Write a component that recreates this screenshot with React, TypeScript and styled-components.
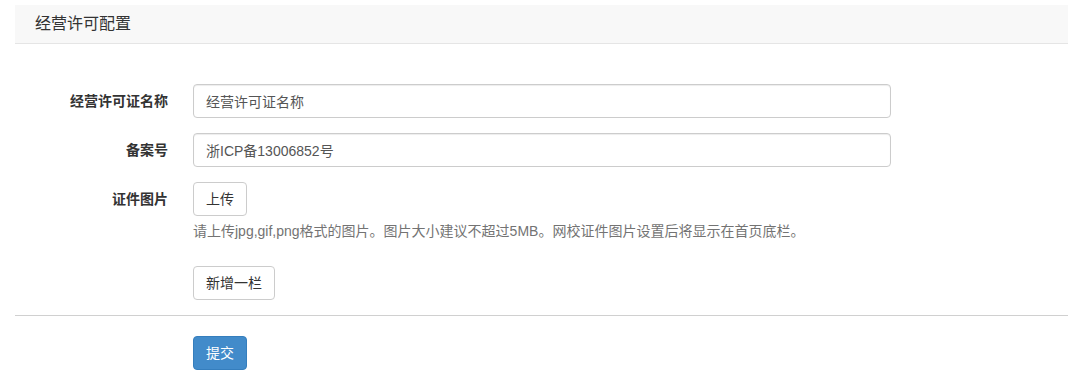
import React from "react";
import styled, { createGlobalStyle } from "styled-components";

const Global = createGlobalStyle`
  html, body { margin: 0; padding: 0; background: #fff; }
  body {
    font-family: "Liberation Sans", "Noto Sans CJK SC", sans-serif;
    font-size: 14px;
    line-height: 20px;
    color: #333;
  }
  * { box-sizing: border-box; }
`;

const Page = styled.div`
  padding: 5px 12px 0 15px;
`;

const Header = styled.div`
  height: 39px;
  background: #f8f8f8;
  border-bottom: 1px solid #e5e5e5;
  display: flex;
  align-items: center;
  padding-left: 20px;
  font-size: 16px;
  color: #333;
`;

const Form = styled.form`
  padding-top: 40px;
  display: flex;
  flex-direction: column;
`;

const Row = styled.div<{ $mb?: number }>`
  display: grid;
  grid-template-columns: 153px 698px;
  column-gap: 25px;
  margin-bottom: ${(p) => (p.$mb ?? 15)}px;
`;

const Label = styled.label`
  text-align: right;
  font-weight: bold;
  padding-top: 7px;
  line-height: 20px;
`;

const Field = styled.div`
  display: flex;
  flex-direction: column;
  align-items: flex-start;
`;

const Input = styled.input`
  width: 100%;
  height: 34px;
  padding: 6px 12px;
  font-family: inherit;
  font-size: 14px;
  color: #555;
  border: 1px solid #ccc;
  border-radius: 4px;
  box-shadow: inset 0 1px 1px rgba(0, 0, 0, 0.075);
  outline: none;
  &::placeholder { color: #555; }
`;

const Button = styled.button<{ $primary?: boolean }>`
  height: 34px;
  padding: 6px 12px;
  font-family: inherit;
  font-size: 14px;
  line-height: 20px;
  border-radius: 4px;
  border: 1px solid ${(p) => (p.$primary ? "#357ebd" : "#ccc")};
  background: ${(p) => (p.$primary ? "#428bca" : "#fff")};
  color: ${(p) => (p.$primary ? "#fff" : "#333")};
  cursor: pointer;
`;

const Help = styled.span`
  display: block;
  margin-top: 5px;
  margin-bottom: 10px;
  color: #737373;
  white-space: nowrap;
`;

const Divider = styled.hr`
  border: 0;
  border-top: 1px solid #d0d0d0;
  margin: 0 0 20px 0;
`;

export default function App() {
  return (
    <>
      <Global />
      <Page>
        <Header>经营许可配置</Header>
        <Form onSubmit={(e) => e.preventDefault()}>
          <Row>
            <Label>经营许可证名称</Label>
            <Field>
              <Input defaultValue="经营许可证名称" />
            </Field>
          </Row>
          <Row>
            <Label>备案号</Label>
            <Field>
              <Input defaultValue="浙ICP备13006852号" />
            </Field>
          </Row>
          <Row>
            <Label>证件图片</Label>
            <Field>
              <Button type="button">上传</Button>
              <Help>请上传jpg,gif,png格式的图片。图片大小建议不超过5MB。网校证件图片设置后将显示在首页底栏。</Help>
            </Field>
          </Row>
          <Row>
            <span />
            <Field>
              <Button type="button">新增一栏</Button>
            </Field>
          </Row>
          <Divider />
          <Row $mb={0}>
            <span />
            <Field>
              <Button type="submit" $primary>提交</Button>
            </Field>
          </Row>
        </Form>
      </Page>
    </>
  );
}
